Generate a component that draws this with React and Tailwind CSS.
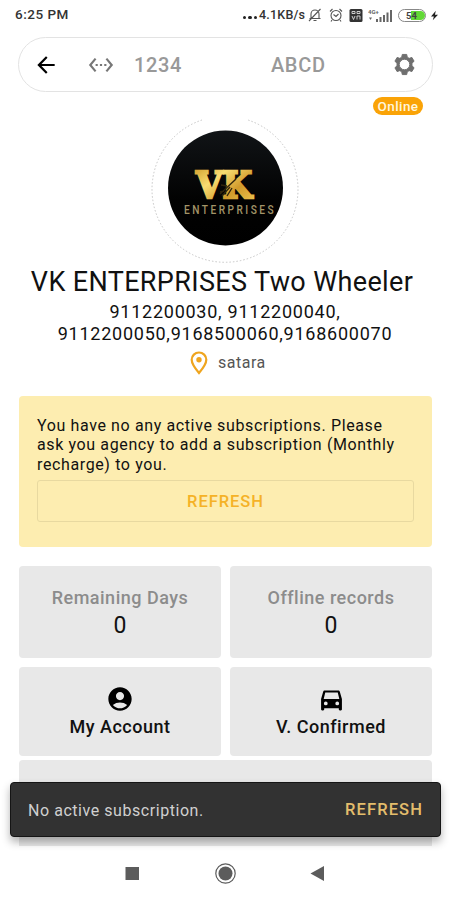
import React from 'react';
import { MdAccountCircle, MdArrowBack, MdSettingsEthernet } from 'react-icons/md';

const StatusBar = () => (
  <div className="h-[30px] shrink-0 flex items-center pl-[15px] pr-[11px] text-[#333]">
    <span className="-mt-[1px] text-[13.5px] font-medium tracking-[0.5px]">6:25 PM</span>
    <div className="ml-auto flex items-center">
      <div className="flex gap-[2px] mt-[5px] mr-[2px]">
        <span className="size-[3.5px] rounded-full bg-[#222]" />
        <span className="size-[3.5px] rounded-full bg-[#222]" />
        <span className="size-[3.5px] rounded-full bg-[#222]" />
      </div>
      <span className="w-[48px] text-[12.5px] font-medium tracking-[0.2px] whitespace-nowrap">4.1KB/s</span>
      {/* Muted bell */}
      <svg className="ml-[1px] w-[14px] h-[14px]" viewBox="0 0 14 14" fill="none" stroke="#555" strokeWidth="1.1">
        <path d="M3 10V6a4 4 0 0 1 8 0v4M1.500 10.500h11M5.500 12.500h3M12.500 1L1 13" />
      </svg>
      {/* Alarm */}
      <svg className="ml-[7px] w-[14px] h-[14px]" viewBox="0 0 14 14" fill="none" stroke="#555" strokeWidth="1.1">
        <circle cx="7" cy="7.500" r="5" />
        <path d="M1 3.500L3.500 1M13 3.500L10.500 1M4.500 6.500L7 8.500l2.500-2.500M3 12l-1 1.500M11 12l1 1.500" />
      </svg>
      {/* VoLTE */}
      <svg className="ml-[6px] w-[14px] h-[13px]" viewBox="0 0 13 13">
        <rect width="13" height="13" rx="1.500" fill="#333" />
        <path d="M2.500 2.500h3v2h-3zM7.500 2.500h3v2h-3zM2.500 7l1.500 3.500L5.500 7M7.500 10.500V7h3v3.500" fill="none" stroke="#ddd" strokeWidth=".9" />
      </svg>
      {/* Signal */}
      <svg className="ml-[5px] w-[24px] h-[13px]" viewBox="0 0 24 13" fill="#666">
        <path d="M8 10h2v3H8zM11.500 8h2v5h-2zM15 6h2v7h-2zM18.500 3.500h2V13h-2zM22 1h2v12h-2z" />
        <text x="0" y="5" fontSize="6" fontWeight="700">4G+</text>
        <path d="M1 8.500h3L2.500 11z" />
      </svg>
      {/* Battery */}
      <svg className="ml-[6px] w-[28px] h-[13px]" viewBox="0 0 28 13">
        <rect x=".5" y=".5" width="27" height="12" rx="6" fill="#fff" stroke="#888" />
        <path d="M13 2h9.500a4.500 4.500 0 0 1 0 9H13z" fill="#62d836" />
        <text x="8" y="10" fontSize="9.500" fontWeight="700" fill="#444">54</text>
      </svg>
      <svg className="ml-[5px] mr-[1px] w-[7px] h-[11px]" viewBox="0 0 8 11" fill="#222">
        <path d="M5.500 0L0 6.500h3.300L2 11l6-6.500H4.500z" />
      </svg>
    </div>
  </div>
);

// Gear with a wide centre hole
const GearIcon = ({ className }) => (
  <svg className={className} viewBox="0 0 24 24" fill="#6f6f6f" stroke="#6f6f6f" strokeWidth="1" strokeLinejoin="round">
    <path
      fillRule="evenodd"
      d="M9.700 1.500h4.600l.6 2.900 2 1.200 2.800-1 2.300 4-2.200 2v2.800l2.200 2-2.300 4-2.800-1-2 1.200-.6 2.900H9.700l-.6-2.900-2-1.200-2.800 1-2.300-4 2.200-2v-2.800L2 8.600l2.300-4 2.800 1 2-1.200zM12 6.500a5.500 5.500 0 1 0 0 11 5.500 5.500 0 0 0 0-11z"
    />
  </svg>
);

const CarIcon = ({ className }) => (
  <svg className={className} viewBox="0 0 24 24" fill="#000">
    <path
      fillRule="evenodd"
      d="M5.500 2.500h13c.8 0 1.300.5 1.500 1.200l2 6.800v10c0 .6-.4 1-1 1h-1c-.6 0-1-.4-1-1V19.500H5v1c0 .6-.4 1-1 1H3c-.6 0-1-.4-1-1v-10l2-6.800c.2-.7.700-1.200 1.500-1.200zM6 4.300L4.500 10.500h15L18 4.300zM6.500 13a1.800 1.800 0 1 0 0 3.600 1.800 1.800 0 0 0 0-3.600zM17.500 13a1.800 1.800 0 1 0 0 3.600 1.800 1.800 0 0 0 0-3.600z"
    />
  </svg>
);

const SearchBar = () => (
  <div className="mt-[7px] mx-[18px] h-[55px] w-[415px] shrink-0 flex items-center rounded-full border-[1.5px] border-[#e3e3e3] pl-[14px] pr-[16px] text-[20px] font-medium text-[#999]">
    <MdArrowBack className="size-[26px] text-black" />
    <MdSettingsEthernet className="ml-[29px] size-[26px] text-[#777]" />
    <span className="ml-[20px] tracking-[0.6px]">1234</span>
    <span className="ml-[89px] tracking-[0.7px]">ABCD</span>
    <GearIcon className="ml-auto size-[23px]" />
  </div>
);

const Logo = () => (
  <svg className="w-[150px] h-[146px] mt-[2px] ml-[150px] shrink-0" viewBox="0 0 150 146">
    <defs>
      <linearGradient id="gold" x1="0" y1="0" x2="1" y2="1">
        <stop offset="0" stopColor="#c99522" />
        <stop offset=".35" stopColor="#f8dd72" />
        <stop offset=".65" stopColor="#d19a2b" />
        <stop offset="1" stopColor="#f1cb55" />
      </linearGradient>
      <linearGradient id="disc" x1="0" y1="0" x2="0" y2="1">
        <stop offset="0" stopColor="#111417" />
        <stop offset=".6" stopColor="#020202" />
        <stop offset="1" stopColor="#000" />
      </linearGradient>
    </defs>
    <path d="M52 3A73 73 0 1 0 98 3" fill="none" stroke="#c6c6c6" strokeDasharray="1.500 2" />
    <circle cx="75.500" cy="71" r="57.500" fill="url(#disc)" />
    <text
      x="46" y="81" textLength="56" lengthAdjust="spacingAndGlyphs"
      fontFamily="DejaVu Serif" fontWeight="700" fontSize="37"
      fill="url(#gold)" stroke="url(#gold)" strokeWidth="2.500"
    >
      VK
    </text>
    <path d="M86 62L70 77M80 70l-8 9M77 69l-6-1M82 71l-5 8M74 74l-4 1" stroke="#30240c" strokeWidth="1.400" fill="none" />
    <g transform="translate(34 96.500) scale(.78 1)">
      <text x="0" y="0" fontFamily="Roboto" fontWeight="500" fontSize="13" fill="#a39468" textLength="115" lengthAdjust="spacing">ENTERPRISES</text>
    </g>
  </svg>
);

const StatCard = ({ label, value }) => (
  <div className="flex-1 h-[92px] rounded-[4px] bg-[#e8e8e8] flex flex-col items-center pt-[20px]">
    <div className="text-[18px] leading-[24px] font-medium tracking-[0.5px] text-[#8c8c8c]">{label}</div>
    <div className="mt-[2px] text-[23px] leading-[28px] text-[#111]">{value}</div>
  </div>
);

const ActionCard = ({ icon: Icon, label }) => (
  <div className="flex-1 h-[89px] rounded-[4px] bg-[#e8e8e8] flex flex-col items-center pt-[18px]">
    <Icon className="size-[28px] text-black" />
    <div className="mt-[2px] text-[18px] leading-[24px] font-medium tracking-[0.5px] text-[#111]">{label}</div>
  </div>
);

// The car glyph sits a little lower and smaller than the account one
const ConfirmedIcon = () => (
  <span className="h-[28px] flex items-center pt-[3px]">
    <CarIcon className="size-[25px]" />
  </span>
);

const Snackbar = () => (
  <div className="absolute left-[10px] top-[782px] w-[431px] h-[55px] rounded-[4px] bg-[#323232] border-[1.5px] border-[#151515] shadow-[0_5px_8px_rgba(0,0,0,0.3)] flex items-center justify-between pl-[17px] pr-[17px] pt-[2px]">
    <span className="text-[16px] tracking-[0.55px] text-[#d0d0d0]">No active subscription.</span>
    <span className="text-[16.5px] font-medium tracking-[1.1px] text-[#e3bd6c]">REFRESH</span>
  </div>
);

const NavBar = () => (
  <div className="h-[54px] shrink-0 bg-white">
    <svg className="w-[450px] h-[54px]" viewBox="0 0 450 54" fill="#5c5c5c">
      <rect x="125.500" y="21" width="13.500" height="13" />
      <circle cx="225.500" cy="27.500" r="9.700" fill="none" stroke="#5c5c5c" strokeWidth="1.200" />
      <circle cx="225.500" cy="27.500" r="7" />
      <path d="M310.500 27.500L324 20v15z" />
    </svg>
  </div>
);

const App = () => {
  return (
    <div className="relative w-[450px] h-[900px] overflow-hidden bg-white flex flex-col font-['Roboto',sans-serif]">
      <div className="h-[846px] shrink-0 overflow-hidden flex flex-col">
        <StatusBar />
        <SearchBar />
        <div className="mt-[5px] ml-[373px] w-[50px] h-[18px] shrink-0 rounded-full bg-[#faa307] text-[#fff6de] text-[13.5px] font-medium tracking-[0.4px] leading-[19px] text-center">
          Online
        </div>
        <Logo />
        <h1 className="mt-[2px] -ml-[6px] h-[34px] shrink-0 text-center text-[27px] leading-[34px] tracking-[0.36px] whitespace-nowrap text-[#111]">
          VK ENTERPRISES Two Wheeler
        </h1>
        <div className="mt-[2px] shrink-0 text-center text-[18px] leading-[21.5px] tracking-[0.75px] text-[#111] whitespace-nowrap">
          <div>9112200030, 9112200040,</div>
          <div>9112200050,9168500060,9168600070</div>
        </div>
        <div className="mt-[6px] h-[26px] shrink-0 flex items-center pl-[190px] text-[16px] tracking-[0.5px] text-[#555]">
          <svg className="w-[18px] h-[24px]" viewBox="0 0 18 24">
            <path d="M9 1.500A7.300 7.300 0 0 0 1.700 8.800C1.700 13.500 9 22 9 22s7.300-8.500 7.300-13.200A7.300 7.300 0 0 0 9 1.500z" fill="none" stroke="#efa51f" strokeWidth="2.200" />
            <circle cx="9" cy="8.800" r="2.700" fill="#efa51f" />
          </svg>
          <span className="ml-[10px]">satara</span>
        </div>

        {/* Subscription notice */}
        <div className="mt-[20px] ml-[19px] w-[413px] h-[151px] shrink-0 rounded-[4px] bg-[#fdedb0] px-[18px] pt-[20px]">
          <p className="text-[16px] leading-[19.4px] tracking-[0.62px] text-[#111] whitespace-nowrap">
            You have no any active subscriptions. Please<br />
            ask you agency to add a subscription (Monthly<br />
            recharge) to you.
          </p>
          <button className="mt-[6px] w-full h-[42px] rounded-[3px] border-[1.5px] border-[#e8d9a0] pt-[2px] text-[16.5px] font-medium tracking-[0.95px] text-[#f5b227]">
            REFRESH
          </button>
        </div>

        <div className="mt-[19px] ml-[19px] w-[413px] shrink-0 flex gap-[9px]">
          <StatCard label="Remaining Days" value="0" />
          <StatCard label="Offline records" value="0" />
        </div>
        <div className="mt-[9px] ml-[19px] w-[413px] shrink-0 flex gap-[9px]">
          <ActionCard icon={MdAccountCircle} label="My Account" />
          <ActionCard icon={ConfirmedIcon} label="V. Confirmed" />
        </div>
        <div className="mt-[4px] ml-[19px] w-[413px] h-[89px] shrink-0 rounded-[4px] bg-[#e8e8e8]" />
      </div>
      <NavBar />
      <Snackbar />
    </div>
  );
};

export default App;
